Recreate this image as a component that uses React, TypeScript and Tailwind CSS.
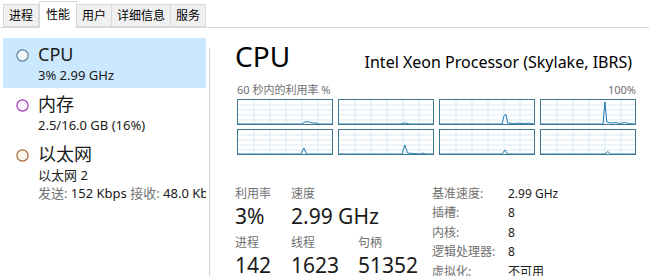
import type { ReactNode } from 'react';

const FONT = '"Noto Sans", "Noto Sans CJK SC", sans-serif';

type Pt = [number, number];

// each graph: points as [x%, height px from bottom], inner box 94x24
const graphs: Pt[][] = [
  [[0, 0], [68, 0], [71, 2], [74, 2.5], [77, 1.5], [80, 1], [84, 1], [86, 0], [100, 0]],
  [[0, 0], [66, 0], [69, 1], [72, 0.8], [75, 0], [100, 0]],
  [[0, 0], [66, 0], [68, 8], [70, 10], [72, 1], [78, 0.5], [82, 0.8], [90, 0.5], [95, 0.8], [100, 0]],
  [[0, 0], [66, 0], [68, 22], [70, 2], [75, 1], [80, 1.5], [83, 0.5], [90, 1.5], [93, 0.5], [100, 0]],
  [[0, 0], [67, 0], [70, 6], [73, 0], [100, 0]],
  [[0, 0], [67, 0], [70, 9], [73, 1], [86, 0], [89, 1], [92, 0], [100, 0]],
  [[0, 0], [66, 0], [69, 4], [72, 0], [100, 0]],
  [[0, 0], [68, 0], [71, 2.5], [74, 0], [100, 0]],
];

function Graph({ pts }: { pts: Pt[] }) {
  const line = pts.map(([x, h]) => `${(x / 100) * 94},${24 - h}`).join(' ');
  const area = `0,24 ${line} 94,24`;
  return (
    <div className="h-[26px] w-[96px] border border-[#3f7690] bg-white">
      <svg width="94" height="24" viewBox="0 0 94 24" className="block">
        {[16, 32, 48, 64, 80].map((x) => (
          <line key={x} x1={x} y1="0" x2={x} y2="24" stroke="#d7e9f4" strokeWidth="1" />
        ))}
        {[5, 10, 15, 20].map((y) => (
          <line key={y} x1="0" y1={y} x2="94" y2={y} stroke="#d7e9f4" strokeWidth="1" />
        ))}
        <polygon points={area} fill="#f1f7fb" />
        <polyline points={line} fill="none" stroke="#1f7bb3" strokeWidth="1" />
      </svg>
    </div>
  );
}

function Tab({ label, active }: { label: string; active?: boolean }) {
  return active ? (
    <div className="relative -mb-px flex h-[27px] items-center border border-b-0 border-[#d9d9d9] bg-white px-[6px] text-[12px] text-[#000]">
      {label}
    </div>
  ) : (
    <div className="-ml-px flex h-[23px] items-center border border-[#d9d9d9] bg-[#f0f0f0] px-[5px] text-[12px] text-[#000] first:ml-0">
      {label}
    </div>
  );
}

function SideItem({
  color,
  fill,
  title,
  active,
  children,
}: {
  color: string;
  fill: string;
  title: string;
  active?: boolean;
  children: ReactNode;
}) {
  return (
    <div className={`flex h-[50px] pl-[13px] ${active ? 'bg-[#cce8ff]' : ''}`}>
      <div className="pt-[11px]">
        <svg width="13" height="13" viewBox="0 0 13 13">
          <circle cx="6.5" cy="6.5" r="5.6" fill={fill} stroke={color} strokeWidth="1.2" />
        </svg>
      </div>
      <div className="ml-[9px] flex flex-col pt-[4px]">
        <div className="text-[18px] leading-[24px] text-[#1a1a1a]">{title}</div>
        <div className="whitespace-nowrap text-[13px] leading-[18px] text-[#1a1a1a]">{children}</div>
      </div>
    </div>
  );
}

function Stat({ label, value, w }: { label: string; value: string; w: string }) {
  return (
    <div className={`flex flex-col ${w}`}>
      <div className="text-[12px] leading-[16px] text-[#707070]">{label}</div>
      <div className="mt-[1px] whitespace-nowrap text-[21px] leading-[26px] text-[#1a1a1a]">{value}</div>
    </div>
  );
}

const details: [string, string][] = [
  ['基准速度:', '2.99 GHz'],
  ['插槽:', '8'],
  ['内核:', '8'],
  ['逻辑处理器:', '8'],
  ['虚拟化:', '不可用'],
];

export default function App() {
  return (
    <div className="h-[276px] w-[649px] overflow-hidden bg-white" style={{ fontFamily: FONT }}>
      <div className="flex h-[28px] items-end border-b border-[#d9d9d9] pl-[3px]">
        <Tab label="进程" />
        <Tab label="性能" active />
        <Tab label="用户" />
        <Tab label="详细信息" />
        <Tab label="服务" />
      </div>

      <div className="flex">
        <div className="w-[206px] shrink-0 overflow-hidden pl-[3px] pt-[10px]">
          <SideItem color="#5a8299" fill="#f2f8fc" title="CPU" active>
            3% 2.99 GHz
          </SideItem>
          <SideItem color="#9b3bb5" fill="#fbf3fd" title="内存">
            2.5/16.0 GB (16%)
          </SideItem>
          <div className="flex pl-[13px]">
            <div className="pt-[11px]">
              <svg width="13" height="13" viewBox="0 0 13 13">
                <circle cx="6.5" cy="6.5" r="5.6" fill="#fdf6ef" stroke="#a86a3a" strokeWidth="1.2" />
              </svg>
            </div>
            <div className="ml-[9px] flex flex-col pt-[4px]">
              <div className="text-[18px] leading-[24px] text-[#1a1a1a]">以太网</div>
              <div className="text-[13px] leading-[18px] text-[#1a1a1a]">以太网 2</div>
              <div className="whitespace-nowrap text-[13px] leading-[18px] text-[#1a1a1a]">
                <span className="text-[#707070]">发送:</span> 152 Kbps <span className="text-[#707070]">接收:</span> 48.0 Kbps
              </div>
            </div>
          </div>
        </div>

        <div className="ml-[3px] mt-[20px] h-[240px] w-px bg-[#d0d0d0]" />

        <div className="flex flex-1 flex-col pl-[25px] pr-[13px] pt-[9px]">
          <div className="flex items-end justify-between pr-[4px]">
            <div className="text-[28px] leading-[38px] text-[#000]">CPU</div>
            <div className="mb-[2px] whitespace-nowrap text-[16px] leading-[22px] text-[#000]">
              Intel Xeon Processor (Skylake, IBRS)
            </div>
          </div>
          <div className="mt-[8px] flex justify-between pl-[2px] text-[11px] leading-[14px] text-[#707070]">
            <span>60 秒内的利用率 %</span>
            <span>100%</span>
          </div>
          <div className="ml-[2px] mt-[2px] grid grid-cols-[repeat(4,96px)] gap-x-[5px] gap-y-[4px]">
            {graphs.map((g, i) => (
              <Graph key={i} pts={g} />
            ))}
          </div>

          <div className="mt-[31px] flex">
            <div className="flex w-[197px] flex-col">
              <div className="flex">
                <Stat label="利用率" value="3%" w="w-[56px]" />
                <Stat label="速度" value="2.99 GHz" w="w-[67px]" />
              </div>
              <div className="mt-[6px] flex">
                <Stat label="进程" value="142" w="w-[56px]" />
                <Stat label="线程" value="1623" w="w-[67px]" />
                <Stat label="句柄" value="51352" w="w-[70px]" />
              </div>
            </div>
            <div className="-mt-[2px] flex flex-col">
              {details.map(([k, v]) => (
                <div key={k} className="flex h-[19.5px] items-center text-[12px]">
                  <span className="w-[76px] text-[#707070]">{k}</span>
                  <span className="text-[#1a1a1a]">{v}</span>
                </div>
              ))}
            </div>
          </div>
        </div>
      </div>
    </div>
  );
}
